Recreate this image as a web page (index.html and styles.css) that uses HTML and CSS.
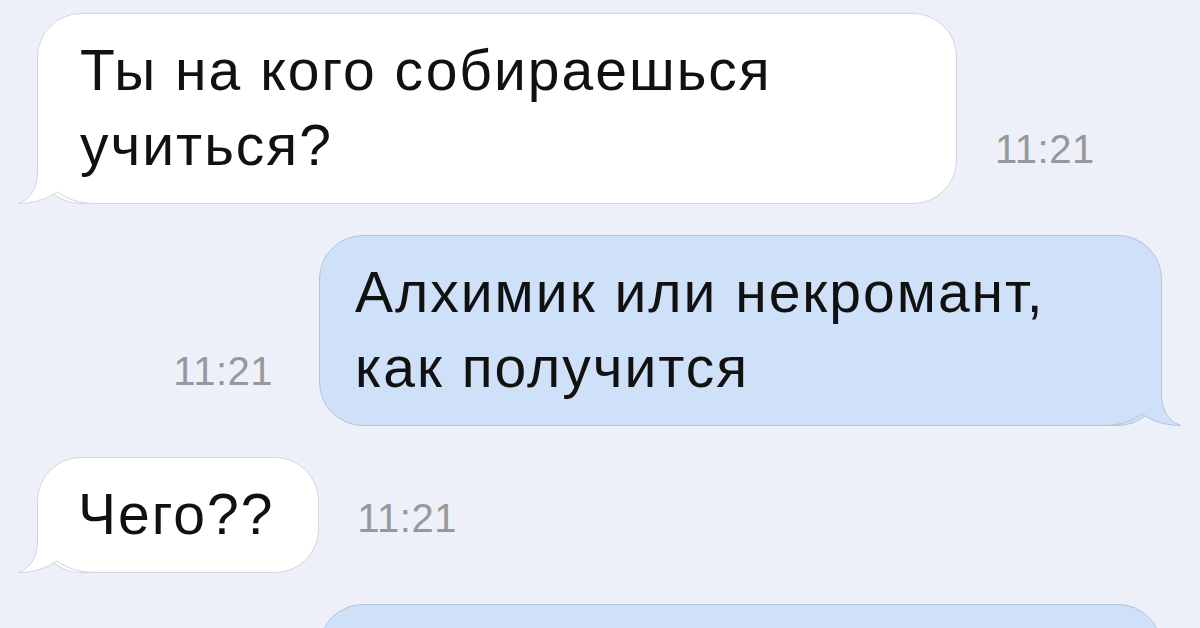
FILE: index.html
```html
<!DOCTYPE html>
<html lang="ru">
<head>
  <meta charset="UTF-8">
  <meta name="viewport" content="width=device-width, initial-scale=1.0">
  <title>Сообщения</title>
  <link rel="stylesheet" href="styles.css">
</head>
<body>
  <div class="thread">
    <div class="row row-in">
      <div class="bubble bubble-in bubble-wide">
        <svg class="tail" width="90" height="46" viewBox="0 0 90 46">
          <path class="tail-fill" d="M20.5 0 L20.5 14 C20.5 32 12 42 1 45.5 C14 45.5 29 42 40 34 C50 41 62 45.5 80 45.5 L90 45.5 L90 0 Z"/>
          <path class="tail-line" d="M20.5 0 L20.5 14 C20.5 32 12 42 1 45.5 C14 45.5 29 42 40 34 C50 41 62 45.5 80 45.5 L90 45.5"/>
        </svg>
        <span class="text">Ты на кого собираешься<br>учиться?</span>
      </div>
      <span class="time">11:21</span>
    </div>

    <div class="row row-out">
      <span class="time">11:21</span>
      <div class="bubble bubble-out bubble-long">
        <svg class="tail" width="90" height="46" viewBox="0 0 90 46">
          <path class="tail-fill" d="M20.5 0 L20.5 14 C20.5 32 12 42 1 45.5 C14 45.5 29 42 40 34 C50 41 62 45.5 80 45.5 L90 45.5 L90 0 Z"/>
          <path class="tail-line" d="M20.5 0 L20.5 14 C20.5 32 12 42 1 45.5 C14 45.5 29 42 40 34 C50 41 62 45.5 80 45.5 L90 45.5"/>
        </svg>
        <span class="text">Алхимик или некромант,<br>как получится</span>
      </div>
    </div>

    <div class="row row-in">
      <div class="bubble bubble-in bubble-short">
        <svg class="tail" width="90" height="46" viewBox="0 0 90 46">
          <path class="tail-fill" d="M20.5 0 L20.5 14 C20.5 32 12 42 1 45.5 C14 45.5 29 42 40 34 C50 41 62 45.5 80 45.5 L90 45.5 L90 0 Z"/>
          <path class="tail-line" d="M20.5 0 L20.5 14 C20.5 32 12 42 1 45.5 C14 45.5 29 42 40 34 C50 41 62 45.5 80 45.5 L90 45.5"/>
        </svg>
        <span class="text">Чего??</span>
      </div>
      <span class="time">11:21</span>
    </div>

    <div class="row row-out">
      <div class="bubble bubble-out bubble-long bubble-cut"></div>
    </div>
  </div>
</body>
</html>
```

FILE: styles.css
```css
body {
  margin: 0;
  height: 628px;
  overflow: hidden;
  background: #edf0f8;
  font-family: "Liberation Sans", Arial, sans-serif;
  color: #111;
}

.thread {
  display: flex;
  flex-direction: column;
  gap: 31px;
  padding: 13px 38px 0 37px;
}

.row {
  display: flex;
  align-items: flex-end;
}

.row-out {
  justify-content: flex-end;
}

.bubble {
  position: relative;
  box-sizing: border-box;
  padding: 19px 40px 20px 42px;
  border: 1px solid #d3d6dd;
  border-radius: 44px;
  font-size: 57px;
  line-height: 75px;
  letter-spacing: 2px;
  white-space: nowrap;
}

.bubble .text {
  position: relative;
}

.bubble-in {
  background: #fff;
}

.bubble-out {
  background: #cfe1f8;
  border-color: #b4c4d8;
  padding-left: 35px;
}

.bubble-wide {
  width: 920px;
}

.bubble-long {
  width: 843px;
}

.bubble-short {
  padding-right: 44px;
  padding-left: 40px;
}

.bubble-cut {
  height: 120px;
}

.tail {
  position: absolute;
  left: -21px;
  bottom: -1px;
  display: block;
}

.bubble-out .tail {
  left: auto;
  right: -21px;
  transform: scaleX(-1);
}

.tail-fill {
  fill: #fff;
}

.tail-line {
  fill: none;
  stroke: #d3d6dd;
  stroke-width: 1;
}

.bubble-out .tail-fill {
  fill: #cfe1f8;
}

.bubble-out .tail-line {
  stroke: #b4c4d8;
}

.time {
  font-size: 40px;
  line-height: 40px;
  letter-spacing: 0.5px;
  color: #98989c;
  margin-bottom: 35px;
}

.row-in .time {
  margin-left: 38px;
}

.row-out .time {
  margin-right: 46px;
}
```
